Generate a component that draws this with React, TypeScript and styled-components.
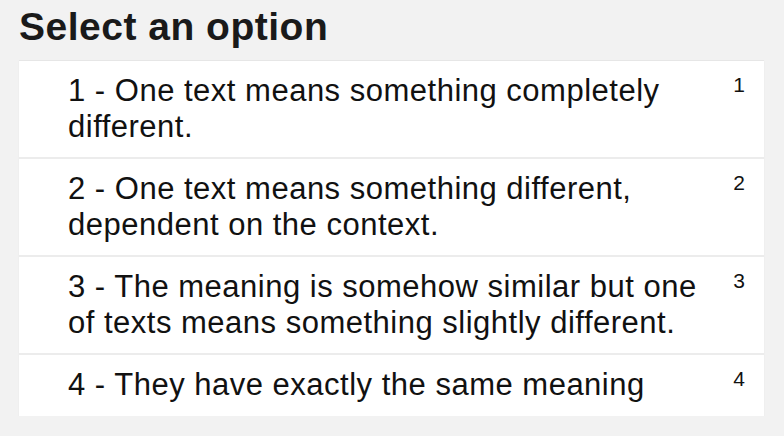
import React from "react";
import styled, { createGlobalStyle } from "styled-components";

const Global = createGlobalStyle`
  html, body { margin: 0; padding: 0; background: #f2f2f2; }
  body { font-family: "Liberation Sans", Arial, Helvetica, sans-serif; color: #111; }
`;

const Page = styled.div`
  padding: 4px 20px 0 19px;
  display: flex;
  flex-direction: column;
`;

const Title = styled.h1`
  margin: 0 0 10px 0;
  font-size: 39px;
  line-height: 46px;
  font-weight: 700;
  letter-spacing: 0.5px;
  color: #1a1a1a;
`;

const List = styled.div`
  display: flex;
  flex-direction: column;
  background: #fff;
  border-top: 1px solid #e6e6e6;
  box-shadow: 0 1px 2px rgba(0, 0, 0, 0.04);
`;

const Row = styled.div<{ $last?: boolean }>`
  display: flex;
  align-items: flex-start;
  padding: 12px 19px ${(p) => (p.$last ? "13px" : "12px")} 49px;
  border-bottom: ${(p) => (p.$last ? "none" : "2px solid #ececec")};
`;

const Label = styled.div`
  flex: 1;
  font-size: 31px;
  line-height: 36px;
  letter-spacing: 0.5px;
  color: #111;
`;

const Num = styled.div`
  margin: 1px 0 0 16px;
  font-size: 21px;
  line-height: 21px;
  color: #111;
`;

const options = [
  "1 - One text means something completely different.",
  "2 - One text means something different, dependent on the context.",
  "3 - The meaning is somehow similar but one of texts means something slightly different.",
  "4 - They have exactly the same meaning",
];

export default function App() {
  return (
    <>
      <Global />
      <Page>
        <Title>Select an option</Title>
        <List>
          {options.map((o, i) => (
            <Row key={i} $last={i === options.length - 1}>
              <Label>{o}</Label>
              <Num>{i + 1}</Num>
            </Row>
          ))}
        </List>
      </Page>
    </>
  );
}
